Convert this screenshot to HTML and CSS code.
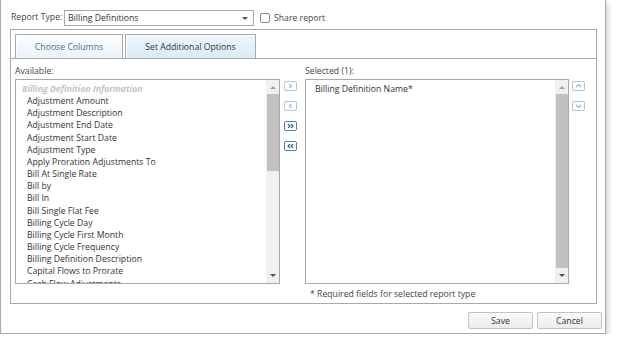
FILE: index.html
```html
<!DOCTYPE html>
<html lang="en">
<head>
  <meta charset="UTF-8" />
  <title>Report Options</title>
  <link rel="stylesheet" href="styles.css">
</head>
<body>

<div class="dialog">

  <!-- Report type -->
  <div class="report-row">
    <label class="field-label">Report Type:</label>
    <div class="select">
      <span>Billing Definitions</span>
      <span class="caret"></span>
    </div>
    <label class="check"><span class="box"></span>Share report</label>
  </div>

  <!-- Tabs -->
  <div class="panel">
    <div class="tabs">
      <div class="tab">Choose Columns</div>
      <div class="tab active">Set Additional Options</div>
    </div>

    <div class="tab-body">
      <div class="picker">
        <div class="col-label">Available:</div>
        <div></div>
        <div class="col-label">Selected (1):</div>
        <div></div>

        <!-- Available list -->
        <div class="listbox">
          <ul class="items">
            <li class="group">Billing Definition Information</li>
            <li>Adjustment Amount</li>
            <li>Adjustment Description</li>
            <li>Adjustment End Date</li>
            <li>Adjustment Start Date</li>
            <li>Adjustment Type</li>
            <li>Apply Proration Adjustments To</li>
            <li>Bill At Single Rate</li>
            <li>Bill by</li>
            <li>Bill In</li>
            <li>Bill Single Flat Fee</li>
            <li>Billing Cycle Day</li>
            <li>Billing Cycle First Month</li>
            <li>Billing Cycle Frequency</li>
            <li>Billing Definition Description</li>
            <li>Capital Flows to Prorate</li>
            <li>Cash Flow Adjustments</li>
          </ul>
          <div class="scrollbar">
            <span class="arrow up"></span>
            <span class="thumb short"></span>
            <span class="arrow down"></span>
          </div>
        </div>

        <!-- Move buttons -->
        <div class="move-btns">
          <button class="mini off"><svg width="7" height="6" viewBox="0 0 7 6"><polyline points="2.5,1 4.5,3 2.5,5" /></svg></button>
          <button class="mini off"><svg width="7" height="6" viewBox="0 0 7 6"><polyline points="4.5,1 2.5,3 4.5,5" /></svg></button>
          <button class="mini"><svg width="7" height="6" viewBox="0 0 7 6"><polyline points="1,1 3,3 1,5" /><polyline points="4,1 6,3 4,5" /></svg></button>
          <button class="mini"><svg width="7" height="6" viewBox="0 0 7 6"><polyline points="3,1 1,3 3,5" /><polyline points="6,1 4,3 6,5" /></svg></button>
        </div>

        <!-- Selected list -->
        <div class="listbox">
          <ul class="items selected">
            <li>Billing Definition Name*</li>
          </ul>
          <div class="scrollbar">
            <span class="arrow up"></span>
            <span class="thumb"></span>
            <span class="arrow down"></span>
          </div>
        </div>

        <!-- Order buttons -->
        <div class="order-btns">
          <button class="mini off"><svg width="7" height="6" viewBox="0 0 7 6"><polyline points="1,4 3.5,1.5 6,4" /></svg></button>
          <button class="mini off"><svg width="7" height="6" viewBox="0 0 7 6"><polyline points="1,2 3.5,4.5 6,2" /></svg></button>
        </div>

        <div></div>
        <div></div>
        <div class="note">* Required fields for selected report type</div>
        <div></div>
      </div>
    </div>
  </div>

  <!-- Footer -->
  <div class="footer">
    <button class="btn">Save</button>
    <button class="btn">Cancel</button>
  </div>
</div>

</body>
</html>
```

FILE: styles.css
```css
body {
  margin: 0;
  background: white;
  font-family: 'Open Sans', sans-serif;
  font-size: 8.7px;
  color: #333;
}

.dialog {
  box-sizing: border-box;
  width: 606px;
  height: 334px;
  border: 1px solid #a9a9a9;
  border-top: none;
  background: white;
  box-shadow: 2px 3px 5px rgba(0,0,0,0.18);
  display: flex;
  flex-direction: column;
}

/* report type row */
.report-row {
  height: 29px;
  display: flex;
  align-items: flex-start;
  padding-left: 10px;
  white-space: nowrap;
}

.field-label {
  margin-top: 11px;
  line-height: 12px;
  color: #444;
  width: 53px;
}

.select {
  box-sizing: border-box;
  margin-top: 10px;
  width: 190px;
  height: 16px;
  border: 1px solid #a9a9a9;
  display: flex;
  align-items: center;
  justify-content: space-between;
  padding: 0 5px 0 3px;
  line-height: 12px;
}

.caret {
  width: 0;
  height: 0;
  border-left: 3px solid transparent;
  border-right: 3px solid transparent;
  border-top: 3px solid #555;
}

.check {
  display: flex;
  align-items: center;
  margin-top: 12px;
  margin-left: 6px;
  line-height: 12px;
  color: #444;
}

.check .box {
  box-sizing: border-box;
  width: 10px;
  height: 10px;
  border: 1px solid #8a8a8a;
  border-radius: 2px;
  margin-right: 4px;
}

/* tab panel */
.panel {
  box-sizing: border-box;
  margin-left: 9px;
  width: 587px;
  height: 275px;
  border: 1px solid #a9a9a9;
  display: flex;
  flex-direction: column;
}

.tabs {
  height: 28px;
  box-sizing: border-box;
  padding: 4px 0 0 4px;
  display: flex;
  gap: 2px;
}

.tab {
  box-sizing: border-box;
  height: 24px;
  width: 108px;
  border: 1px solid #a9a9a9;
  border-bottom: none;
  box-shadow: inset 1px 1px 0 #fff;
  background: linear-gradient(#fdfeff, #eaf2f9);
  color: #3f6f9f;
  display: flex;
  align-items: center;
  justify-content: center;
}

.tab.active {
  width: 131px;
  background: linear-gradient(#eef6fd, #dcebf8);
  color: #333;
}

.tab-body {
  flex: 1;
  border-top: 1px solid #a9a9a9;
  padding-left: 4px;
}

.picker {
  display: grid;
  grid-template-columns: 265px 25px 264px 16px;
  grid-template-rows: 20px 205px auto;
}

.col-label {
  padding-top: 6px;
  line-height: 12px;
  color: #444;
}

.listbox {
  box-sizing: border-box;
  border: 1px solid #a9a9a9;
  display: flex;
  overflow: hidden;
}

.items {
  flex: 1;
  list-style: none;
  margin: 0;
  padding: 3px 0 0 11px;
  line-height: 12.15px;
  white-space: nowrap;
  overflow: hidden;
}

.items .group {
  margin-left: -5px;
  color: #c4c4c4;
  font-style: italic;
  font-weight: bold;
}

.items.selected {
  padding-left: 9px;
}

.scrollbar {
  width: 13px;
  background: #f0f0f0;
  display: flex;
  flex-direction: column;
  align-items: center;
}

.scrollbar .thumb {
  width: 12px;
  flex: 1;
  background: #c1c1c1;
}

.scrollbar .thumb.short {
  flex: none;
  height: 77px;
  margin-bottom: auto;
}

.arrow {
  width: 0;
  height: 0;
  margin: 6px 0 5px;
  border-left: 3px solid transparent;
  border-right: 3px solid transparent;
}

.arrow.up {
  border-bottom: 3px solid #a3a3a3;
}

.arrow.down {
  border-top: 3px solid #505050;
  margin: 6px 0 6px;
}

/* small arrow buttons */
.move-btns,
.order-btns {
  display: flex;
  flex-direction: column;
  gap: 10px;
  padding-top: 2px;
}

.move-btns {
  padding-left: 4px;
}

.order-btns {
  padding-left: 3px;
}

.mini {
  box-sizing: border-box;
  width: 13px;
  height: 10px;
  padding: 0;
  border: 1px solid #4f7fb5;
  border-radius: 2px;
  background: #fff;
  display: flex;
  align-items: center;
  justify-content: center;
}

.mini svg {
  fill: none;
  stroke: #2e5f97;
  stroke-width: 1.1;
}

.mini.off {
  border-color: #a9c2de;
}

.mini.off svg {
  stroke: #94b2d4;
}

.note {
  padding: 4px 0 0 5px;
  line-height: 12px;
  color: #444;
}

/* footer */
.footer {
  display: flex;
  justify-content: flex-end;
  gap: 4px;
  padding: 8px 3px 0 0;
}

.btn {
  box-sizing: border-box;
  width: 65px;
  height: 17px;
  padding: 0;
  border: 1px solid #c3c3c3;
  border-radius: 2px;
  background: linear-gradient(#fafafa, #ececec);
  font-family: 'Open Sans', sans-serif;
  font-size: 8.7px;
  color: #333;
}
```
